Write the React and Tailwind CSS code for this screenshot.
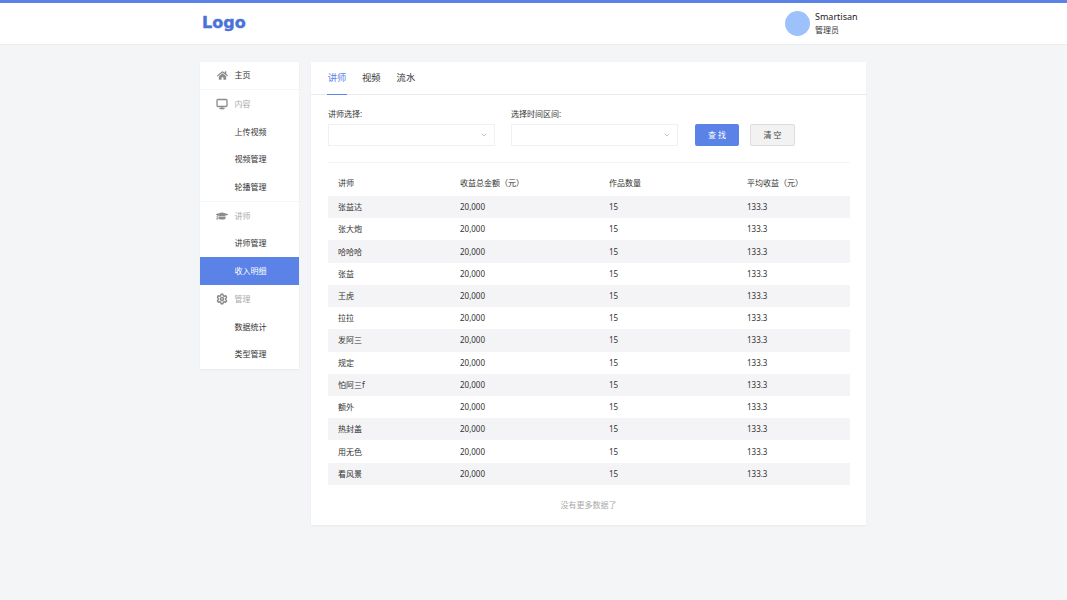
import { ChevronDown, Monitor, Settings } from "lucide-react";
import { FaHome, FaGraduationCap } from "react-icons/fa";

const fontFamily = "font-['Noto_Sans','Noto_Sans_CJK_SC',sans-serif]";

const menu = [
  { label: "主页", icon: FaHome, size: "w-[11px] h-[11px]", type: "top" },
  { label: "内容", icon: Monitor, size: "w-[12px] h-[12px] stroke-[2.6]", type: "group" },
  { label: "上传视频" },
  { label: "视频管理" },
  { label: "轮播管理" },
  { label: "讲师", icon: FaGraduationCap, size: "w-[12px] h-[12px]", type: "group" },
  { label: "讲师管理" },
  { label: "收入明细", active: true },
  { label: "管理", icon: Settings, size: "w-[12px] h-[12px] stroke-[3]", type: "group" },
  { label: "数据统计" },
  { label: "类型管理" },
];

const names = [
  "张益达",
  "张大炮",
  "哈哈哈",
  "张益",
  "王虎",
  "拉拉",
  "发阿三",
  "规定",
  "怕阿三f",
  "额外",
  "热封盖",
  "用无色",
  "看风景",
];

function Header() {
  return (
    <header className="h-[45px] bg-white border-t-[3px] border-[#5b82e6] border-b border-b-[#eceded]">
      <div className="flex h-full items-center justify-between ml-[202px] w-[655px]">
        <span className="font-['DejaVu_Sans',sans-serif] font-bold text-[16px] leading-none text-[#4a72d8] mb-[2px] [-webkit-text-stroke:0.4px_#4a72d8]">
          Logo
        </span>
        <div className="flex items-center gap-[5px] -mt-[1px]">
          <div className="w-[25px] h-[25px] rounded-full bg-[#9dc1fb]" />
          <div className="flex flex-col w-[42px]">
            <span className="text-[9px] leading-[13px] text-[#222]">Smartisan</span>
            <span className="text-[8px] leading-[13px] text-[#333]">管理员</span>
          </div>
        </div>
      </div>
    </header>
  );
}

function Sidebar() {
  return (
    <aside className="w-[99px] h-[307px] bg-white shadow-[0_1px_2px_rgba(0,0,0,0.05)] flex flex-col">
      {menu.map((item) => {
        const Icon = item.icon;
        return (
          <div
            key={item.label}
            className={`flex items-center h-[27.85px] text-[8px] ${
              item.active ? "bg-[#5b82e6] text-white" : item.type === "group" ? "text-[#aaa]" : "text-[#333]"
            } ${item.type === "top" ? "border-b border-[#f4f5f6]" : ""} ${item.label === "讲师" ? "border-t border-[#f4f5f6]" : ""}`}
          >
            <span className="w-[34.5px] flex justify-center pl-[9.5px] shrink-0 text-[#8c8c8c]">
              {Icon && <Icon className={item.size} />}
            </span>
            <span>{item.label}</span>
          </div>
        );
      })}
    </aside>
  );
}

function SelectBox({ label, width }) {
  return (
    <div className={`flex flex-col ${width}`}>
      <span className="text-[8px] leading-[11px] -mt-[1px] mb-[5px] text-[#333]">{label}</span>
      <div className="h-[21.5px] bg-white border border-[#eff0f2] flex items-center justify-end pr-[6px]">
        <ChevronDown className="w-[8px] h-[8px] text-[#aaa]" />
      </div>
    </div>
  );
}

function Filters() {
  return (
    <div className="flex items-end h-[68px] pt-[14px] pb-0 border-b border-[#f3f4f5] ml-[17px] mr-[16px]">
      <div className="flex items-start pb-[17px] h-full">
        <SelectBox label="讲师选择:" width="w-[166.5px]" />
        <div className="ml-[16.5px]">
          <SelectBox label="选择时间区间:" width="w-[167px]" />
        </div>
        <button className="ml-[17px] mt-[15px] w-[44px] h-[21.5px] rounded-[2px] bg-[#5b82e6] text-white text-[8px] tracking-[2px] pl-[2px]">
          查找
        </button>
        <button className="ml-[11px] mt-[15px] w-[45px] h-[21.5px] rounded-[2px] bg-[#f2f2f2] border border-[#ddd] text-[#444] text-[8px] tracking-[2px] pl-[2px]">
          清空
        </button>
      </div>
    </div>
  );
}

function Table() {
  return (
    <div className="ml-[17px] mr-[16px] text-[8px] text-[#333]">
      <div className="grid grid-cols-[122px_149px_138px_1fr] h-[33px] items-end pb-[7px] pl-[10px]">
        <span>讲师</span>
        <span>收益总金额（元）</span>
        <span>作品数量</span>
        <span>平均收益（元）</span>
      </div>
      {names.map((name, i) => (
        <div
          key={name}
          className={`grid grid-cols-[122px_149px_138px_1fr] h-[22.23px] items-center pl-[10px] ${
            i % 2 === 0 ? "bg-[#f4f4f6]" : ""
          }`}
        >
          <span>{name}</span>
          <span>20,000</span>
          <span>15</span>
          <span>133.3</span>
        </div>
      ))}
    </div>
  );
}

export default function App() {
  return (
    <div className={`min-h-[600px] bg-[#f4f5f7] ${fontFamily}`}>
      <Header />
      <div className="flex items-start gap-[12px] mt-[17px] ml-[200px]">
        <Sidebar />
        <main className="w-[555px] h-[463px] bg-white shadow-[0_1px_2px_rgba(0,0,0,0.05)]">
          <div className="flex h-[33px] border-b border-[#e8e9ec] pl-[16px] gap-[15px] text-[9.3px]">
            <span className="w-[20px] text-[#5b82e6] border-b border-[#5b82e6] h-[33px] flex items-center justify-center">讲师</span>
            <span className="text-[#333] flex items-center">视频</span>
            <span className="text-[#333] flex items-center ml-[1px]">流水</span>
          </div>
          <Filters />
          <Table />
          <p className="text-center text-[8px] text-[#aaa] mt-[14px]">没有更多数据了</p>
        </main>
      </div>
    </div>
  );
}
